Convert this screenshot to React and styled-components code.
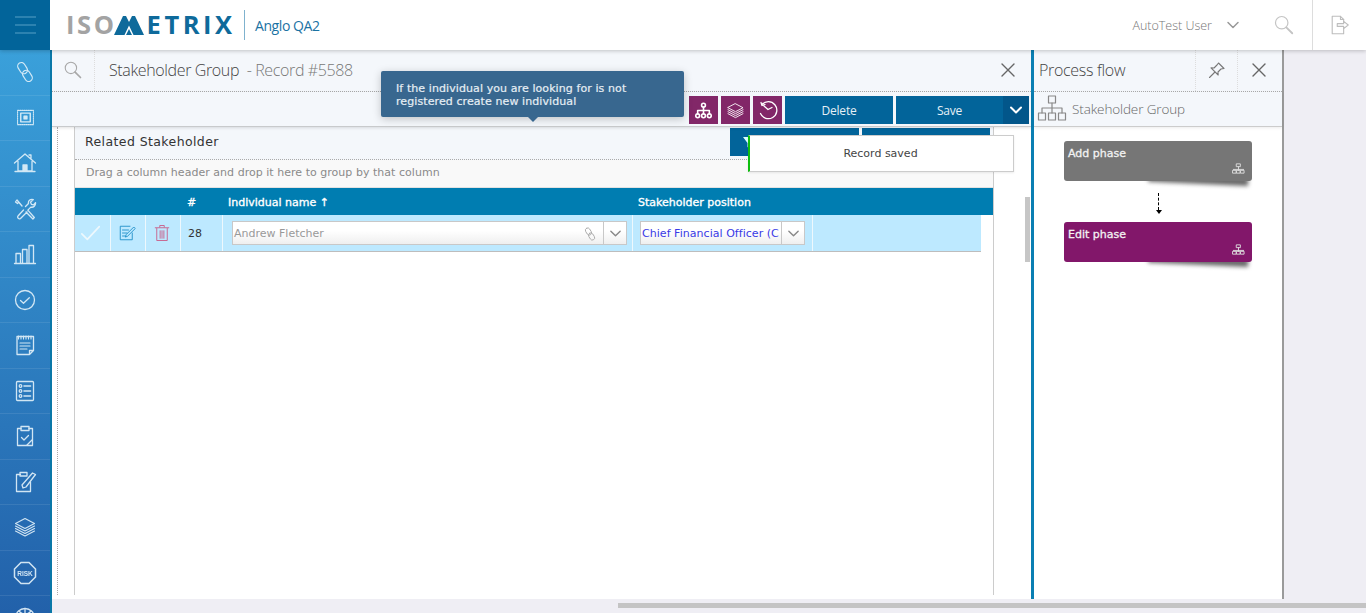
import React from "react";
import styled, { createGlobalStyle } from "styled-components";

const Global = createGlobalStyle`
  html, body { margin: 0; padding: 0; height: 100%; overflow: hidden; background: #efeef4; }
  * { box-sizing: border-box; }
`;

const Page = styled.div`
  width: 1366px; height: 613px; display: flex; flex-direction: column; overflow: hidden; position: relative;
  font-family: "DejaVu Sans", Verdana, sans-serif; background: #efeef4;
`;
const TopBar = styled.header`
  height: 50px; flex: none; display: flex; align-items: center; background: #fff; position: relative; z-index: 3;
  box-shadow: 0 1px 4px rgba(0,0,0,.22);
`;
const Burger = styled.div`
  width: 50px; height: 50px; background: #02649a; display: flex; flex-direction: column; gap: 6px; align-items: center; justify-content: center;
  span { display: block; width: 21px; height: 2px; background: #2c82b0; }
`;
const Logo = styled.div`
  margin-left: 16px; display: flex; align-items: center; font-family: "Open Sans", sans-serif; font-weight: 700; font-size: 25.5px; line-height: 1;
  letter-spacing: 2.6px; width: 178px; height: 30px;
`;
const LogoGrey = styled.span`color: #a3a3a3; margin-right: -3px;`;
const LogoBlue = styled.span`color: #0e6a9b; margin-left: 3px; letter-spacing: 3.5px;`;
const LogoDivider = styled.div`width: 1px; height: 30px; background: #7fb2ce;`;
const Tenant = styled.div`margin-left: 10px; font-family: "Open Sans", sans-serif; font-size: 14px; letter-spacing: -.42px; color: #1a72a3;`;
const TopRight = styled.div`margin-left: auto; display: flex; align-items: center; height: 50px;`;
const UserName = styled.div`font-family: "Open Sans", sans-serif; font-weight: 300; font-size: 12.5px; color: #777;`;
const TopIconSlot = styled.div`
  display: flex; align-items: center; justify-content: center; width: ${p => p.$w}px; height: 50px; margin-left: ${p => p.$ml || 0}px;
  ${p => p.$line ? "border-left: 1px solid #ddd;" : ""}
`;
const Body = styled.div`flex: 1; min-height: 0; display: flex;`;
const Sidebar = styled.nav`
  width: 52px; flex: none; overflow: hidden; background: linear-gradient(180deg, #3aa0da 0%, #2261aa 100%); border-right: 2px solid #0a78a8;
  position: relative; z-index: 2;
`;
const SideItem = styled.div`
  height: 45.5px; display: flex; align-items: center; justify-content: center; border-bottom: 1px solid rgba(255,255,255,.09);
  svg { opacity: .9; }
`;
const Workspace = styled.div`flex: 1; min-width: 0; display: flex; flex-direction: column;`;
const Panels = styled.div`flex: 1; min-height: 0; display: flex;`;
const BottomBar = styled.div`
  height: 14px; flex: none; background: #efeef4; padding: 4px 0 5px 566px;
  span { display: block; height: 5px; background: #c4c4c4; }
`;
const MainPanel = styled.main`width: 979px; flex: none; display: flex; flex-direction: column; background: #fff;`;
const TitleBar = styled.div`
  height: 42px; flex: none; display: flex; align-items: center; background: #f4f7fb; border-bottom: 1px dotted #aaa;
`;
const TitleSearch = styled.div`width: 43px; height: 41px; display: flex; align-items: center; justify-content: center; border-right: 1px dotted #ddd; padding-bottom: 2px;`;
const Title = styled.div`margin: -2px 0 0 14px; font-family: "Open Sans", sans-serif; font-weight: 300; font-size: 16px; letter-spacing: -.37px; color: #444; white-space: pre;
  em { font-style: normal; color: #777; }
`;
const TitleClose = styled.div`margin: -2px 0 0 auto; width: 46px; display: flex; justify-content: center;`;
const Toolbar = styled.div`
  height: 35px; flex: none; display: flex; justify-content: flex-end; gap: 3px; padding: 4px 2px 0 0; background: #f4f7fb; border-bottom: 1px solid #c8cacc;
  box-shadow: 0 1px 3px rgba(0,0,0,.12); position: relative; z-index: 1;
`;
const IconBtn = styled.div`width: 29px; height: 28px; background: #822768; display: flex; align-items: center; justify-content: center;`;
const ActionBtn = styled.div`
  width: ${p => p.$w}px; height: 28px; background: #02649a; color: #e6f0f6; font-family: "Open Sans", sans-serif; font-size: 12px; letter-spacing: -.2px;
  display: flex; align-items: center; justify-content: center;
`;
const Caret = styled.div`width: 26px; height: 28px; margin-left: -3px; background: #02568a; display: flex; align-items: center; justify-content: center;`;
const Content = styled.div`flex: 1; min-height: 0; display: flex; padding-left: 5px; padding-bottom: 4px;`;
const Gutter = styled.div`width: 17px; flex: none; border-left: 1px dotted #aaa;`;
const GridPanel = styled.section`width: 920px; flex: none; display: flex; flex-direction: column; border-left: 1px solid #ccc; border-right: 1px solid #ccc;`;
const SectionHead = styled.div`
  height: 33px; flex: none; display: flex; align-items: flex-start; background: #f4f7fb; border-bottom: 1px dotted #aaa; padding: 1px 3px 0 10px; gap: 3px;
`;
const SectionTitle = styled.div`flex: 1; font-size: 12.5px; line-height: 28px; color: #333; letter-spacing: .4px;`;
const HeadBtn = styled.div`width: ${p => p.$w}px; height: 28px; background: #02649a; padding: 7px 0 0 12px;`;
const GroupHint = styled.div`height: 28px; flex: none; background: #f9f9f9; border-bottom: 1px solid #e2e2e2; padding-left: 11px; font-size: 11px; line-height: 26px; color: #8a8a8a; letter-spacing: .03px;`;
const columns = "36px 35px 35px 42px 410px 180px 1fr";
const HeadRow = styled.div`
  height: 27px; flex: none; display: grid; grid-template-columns: ${columns}; background: #007db1; color: #fff; font-size: 11px; line-height: 29px;
  -webkit-text-stroke: .35px #fff;
`;
const HeadCell = styled.div`padding-left: ${p => p.$pl}px; grid-column: ${p => p.$col}; white-space: nowrap;`;
const DataRow = styled.div`
  height: 37px; width: 906px; flex: none; display: grid; grid-template-columns: ${columns}; background: #bde9ff; border-bottom: 1px solid #bdbdbd;
`;
const Cell = styled.div`
  border-right: ${p => p.$end ? 0 : "1px solid #eef8fd"}; display: flex; align-items: center; ${p => p.$center ? "justify-content: center;" : ""}
  padding: ${p => p.$pad || "0"}; font-size: 11px; color: #333;
`;
const Combo = styled.div`
  height: 24px; width: ${p => p.$w}px; display: flex; border: 1px solid #c8c8c8; background: linear-gradient(180deg, #fff 40%, #efefef 100%);
`;
const ComboText = styled.div`
  flex: 1; min-width: 0; display: flex; align-items: center; justify-content: space-between; padding: 1px 6px 0 1px; white-space: nowrap; overflow: hidden;
  font-size: 11px; color: ${p => p.$color}; letter-spacing: ${p => p.$ls || 0}px;
`;
const ComboBtn = styled.div`width: 23px; flex: none; display: flex; align-items: center; justify-content: center; border-left: 1px solid #c8c8c8;`;
const ScrollArea = styled.div`flex: 1; display: flex; justify-content: flex-end; padding: 70px 1px 0 0;`;
const ScrollThumb = styled.div`width: 5px; height: 65px; background: #c6c6c6;`;

const FlowPanel = styled.aside`
  width: 253px; flex: none; display: flex; flex-direction: column; background: #fff; border-left: 3px solid #0a7fb3; border-right: 2px solid #9a9a9a;
`;
const FlowHead = styled.div`height: 42px; flex: none; display: flex; align-items: center; background: #f4f7fb; border-bottom: 1px dotted #aaa; padding-right: 3px;`;
const FlowTitle = styled.div`flex: 1; margin-top: -2px; padding-left: 5px; font-family: "Open Sans", sans-serif; font-weight: 300; font-size: 16px; letter-spacing: -.3px; color: #444;`;
const FlowTool = styled.div`width: 42px; height: 41px; display: flex; align-items: center; justify-content: center; border-left: 1px dotted #ddd; padding-bottom: 2px;`;
const FlowSub = styled.div`
  height: 35px; flex: none; display: flex; align-items: center; gap: 5px; padding-left: 3px; background: #f4f7fb; border-bottom: 1px solid #ccc;
  font-family: "Open Sans", sans-serif; font-weight: 300; font-size: 13.5px; letter-spacing: -.12px; color: #666; box-shadow: 0 1px 3px rgba(0,0,0,.08);
`;
const FlowBody = styled.div`display: flex; flex-direction: column; align-items: center; padding: 14px 0 0 0;`;
const PhaseCard = styled.div`
  width: 188px; height: 40px; border-radius: 3px; background: ${p => p.$bg}; color: #f2f2f2; font-size: 11px; -webkit-text-stroke: .3px #f2f2f2; padding: 5px 4px 0; line-height: 15px; position: relative;
  svg { position: absolute; right: 7px; bottom: 6px; }
`;
const CardWrap = styled.div`
  position: relative; z-index: 0;
  &::after { content: ""; position: absolute; z-index: -1; right: 4px; bottom: -5px; width: 100px; height: 8px; background: #666; filter: blur(2px); transform: rotate(2.5deg); transform-origin: right bottom; }
`;
const FlowArrow = styled.div`
  height: 41px; display: flex; flex-direction: column; align-items: center; justify-content: flex-start; padding: 12px 0 0 1px;
  i { display: block; width: 0; height: 17px; border-left: 1px dashed #000; }
  b { display: block; width: 0; height: 0; border: 3.5px solid transparent; border-top: 4px solid #000; border-bottom: 0; }
`;
const Tooltip = styled.div`
  position: absolute; left: 381px; top: 71px; width: 303px; height: 46px; background: #38678f; border-radius: 2px; padding: 11px 15px; z-index: 6;
  color: #e6eef4; font-size: 11px; font-weight: 400; line-height: 13px; letter-spacing: .09px; box-shadow: 0 2px 8px rgba(0,0,0,.22); -webkit-text-stroke: .2px #e6eef4;
  &::after { content: ""; position: absolute; left: 147px; bottom: -5px; border: 5px solid transparent; border-top: 5px solid #38678f; border-bottom: 0; }
`;
const Toast = styled.div`
  position: absolute; left: 748px; top: 135px; width: 266px; height: 37px; background: #fff; border: 1px solid #ccc; border-left: 2px solid #0fbf0f; z-index: 6;
  display: flex; align-items: center; justify-content: center; font-size: 11px; color: #444; padding-right: 2px; box-shadow: 0 1px 2px rgba(0,0,0,.08);
`;

const S = ({ size = 24, stroke = "#e4f2fa", sw = 1.3, vb = 24, children, fill = "none" }) => (
  <svg width={size} height={size} viewBox={`0 0 ${vb} ${vb}`} fill={fill} stroke={stroke} strokeWidth={sw} strokeLinecap="round" strokeLinejoin="round">{children}</svg>
);
const ChainLinks = () => <g transform="rotate(-32 12 12)"><rect x="8" y="0.500" width="8" height="13" rx="4" /><rect x="8" y="10.500" width="8" height="13" rx="4" /></g>;
const Chain = () => <S size={22} sw={1.3}><ChainLinks /></S>;
const Chip = () => <S size={19}><rect x="2" y="3" width="20" height="18" strokeDasharray="1.500 1.200" /><rect x="6" y="6.500" width="12" height="11" strokeWidth="1.800" /><rect x="10" y="10" width="4" height="4" fill="#e4f2fa" /></S>;
const Home = () => <S><path d="M1.500 12 12 3l10.500 9M18 7.500V4h-2M5 10.500V20h14v-9.500M2 20.500h20" /><rect x="10" y="14" width="4" height="6" fill="#e4f2fa" /></S>;
const Tools = () => <S><path d="m4 3 5 6M3.500 3.500 2.500 5l2 1.500 1-1.200M10.500 13 5 19a1.800 1.800 0 0 0 2.500 2.500l6.500-6.500M12.500 9.500l3-3c-.6-2.400 1.600-4.700 4.800-3.900L17.500 5.300l.9 2 2.100.6 2-2.300c.4 3-2 5.200-4.700 4.500l-3 3 6.500 7.400-1.400 1.500-6.900-7" /></S>;
const Bars = () => <S><path d="M1.500 21.500h21M3 21v-9.500h4.500V21M9.500 21V7.500H14V21M16 21V3.500h4.500V21" /></S>;
const Check = () => <S><circle cx="12" cy="12" r="9.500" /><path d="m7.500 12.500 3 2.700 5.800-5.400" /></S>;
const NoteBook = () => <S><path d="M4 3.500h16.500v14l-4 4H4zM16.500 21.500v-4h4" /><path d="M5.500 3v3M8 3v3M10.500 3v3M13 3v3M15.500 3v3M18 3v3M7 10h10M7 13h10M7 16h7" strokeWidth="1.100" /></S>;
const ListDoc = () => <S><rect x="3.500" y="2.500" width="17" height="19" rx="1" /><circle cx="7.500" cy="7" r="1.300" /><circle cx="7.500" cy="12" r="1.300" /><circle cx="7.500" cy="17" r="1.300" /><path d="M11 7h6.500M11 12h6.500M11 17h6.500" strokeWidth="1.600" /></S>;
const Clip = () => <S><path d="M8 4.500H4.500v17h15v-17H16" /><rect x="8" y="2.500" width="8" height="4" /><path d="m8.500 13.500 2.500 2.500 4.500-4.500M14 21l5-5" /></S>;
const ClipEdit = () => <S><path d="M7.500 4.500h-4v17h14V12" /><rect x="7" y="2.500" width="7" height="3.500" /><path d="m9 15 1 3 3-1L22.500 4.500 19.500 3z" /></S>;
const Layers = ({ size = 24, stroke = "#e4f2fa" }) => <S size={size} stroke={stroke} sw={1.1}><path d="M12 3.500 21.500 8.500 12 13.500 2.500 8.500zM2.500 11 12 16l9.500-5M2.500 13.500 12 18.500l9.500-5M2.500 16 12 21l9.500-5" /></S>;
const Risk = () => (
  <S sw={1.5}>
    <path d="M8 1.500h8L22.500 8v8L16 22.500H8L1.500 16V8z" strokeLinejoin="miter" />
    <text x="12" y="14.500" textAnchor="middle" fontSize="6.500" fontWeight="700" fontFamily="Liberation Sans, sans-serif" fill="#e4f2fa" stroke="none">RISK</text>
  </S>
);
const Globe = () => <S><circle cx="12" cy="12" r="9.500" /><path d="M2.500 12h19M12 2.500v19M6 5c3 4 9 4 12 0" /></S>;
const Search = ({ size = 20, c = "#a8a8a8" }) => <S size={size} stroke={c} sw={1.3}><circle cx="9.500" cy="9.500" r="6.800" /><path d="m14.500 14.500 6.500 6.500" strokeWidth="2" /></S>;
const Chevron = ({ size = 14, c = "#888", sw = 1.5 }) => <S size={size} stroke={c} sw={sw} vb={14}><path d="m2 4.500 5 5 5-5" /></S>;
const Exit = () => <S size={22} stroke="#bdbdbd" sw={1.2}><path d="M16 9V6l-3.500-3.500H3.500v19H16v-6" /><path d="M12.500 2.500V6H16" /><path d="M9 10.500h7V8l5 4-5 4v-2.500H9z" /></S>;
const XIcon = ({ c = "#666" }) => <S size={14} stroke={c} sw={1.4} vb={14}><path d="m1 1 12 12M13 1 1 13" /></S>;
const Pin = () => <S size={18} stroke="#777" sw={1.1} vb={18}><path d="M1.500 16.500 7 11M10.500 2 16 7.500l-3 .5-3 3 .2 3-7.200-7.200 3 .2 3-3z" /></S>;
const Tree = ({ size = 17, c = "#fff", sw = 1.5 }) => <S size={size} stroke={c} sw={sw} vb={16}><circle cx="8" cy="3" r="1.800" /><circle cx="2.500" cy="13" r="1.800" /><circle cx="8" cy="13" r="1.800" /><circle cx="13.500" cy="13" r="1.800" /><path d="M8 5v6M2.500 11V8h11v3" /></S>;
const History = () => <S size={20} stroke="#fff" sw={1.3} vb={20}><path d="M4 4.500a8.500 8.500 0 1 1-1.500 9" /><path d="m3 2.500 1 3 3-1M6 6l4 3.500 4-2" /></S>;
const OrgChart = () => <S size={30} stroke="#888" sw={1.2} vb={30}><rect x="11.500" y="2" width="7" height="7" /><rect x="1.500" y="19" width="7" height="7" /><rect x="11.500" y="19" width="7" height="7" /><rect x="21.500" y="19" width="7" height="7" /><path d="M15 9v10M5 19v-5h20v5" /></S>;
const MiniFlow = () => <S size={13} stroke="#ddd" sw={1} vb={14}><rect x="5" y="2" width="4" height="3" /><rect x="1" y="9" width="3.500" height="3" /><rect x="5.200" y="9" width="3.500" height="3" /><rect x="9.500" y="9" width="3.500" height="3" /><path d="M7 5v4M1.500 8h11" /></S>;
const MarkM = () => (
  <svg width="30" height="19" viewBox="0 0 30 19">
    <path d="M0 19 9 0h3l3 6 3-6h3l9 19H0z" fill="#0e6a9b" />
    <path d="M10.500 19 15 9.500l4.500 9.500h-1.500L15 13l-3 6z" fill="#fff" />
  </svg>
);

const sideIcons = [Chain, Chip, Home, Tools, Bars, Check, NoteBook, ListDoc, Clip, ClipEdit, Layers, Risk, Globe];

export default function App() {
  return (
    <Page>
      <Global />
      <TopBar>
        <Burger><span /><span /><span /></Burger>
        <Logo>
          <LogoGrey>ISO</LogoGrey><MarkM /><LogoBlue>ETRIX</LogoBlue>
        </Logo>
        <LogoDivider />
        <Tenant>Anglo QA2</Tenant>
        <TopRight>
          <UserName>AutoTest User</UserName>
          <TopIconSlot $w={14} $ml={14}><Chevron c="#999" /></TopIconSlot>
          <TopIconSlot $w={22} $ml={33}><Search size={22} c="#c4c4c4" /></TopIconSlot>
          <TopIconSlot $w={54} $ml={17} $line><Exit /></TopIconSlot>
        </TopRight>
      </TopBar>
      <Body>
        <Sidebar>
          {sideIcons.map((I, i) => <SideItem key={i}><I /></SideItem>)}
        </Sidebar>
        <Workspace>
          <Panels>
            <MainPanel>
              <TitleBar>
                <TitleSearch><Search /></TitleSearch>
                <Title>Stakeholder Group <em> - Record #5588</em></Title>
                <TitleClose><XIcon /></TitleClose>
              </TitleBar>
              <Toolbar>
                <IconBtn><Tree /></IconBtn>
                <IconBtn><Layers size={19} stroke="#fff" /></IconBtn>
                <IconBtn><History /></IconBtn>
                <ActionBtn $w={108}>Delete</ActionBtn>
                <ActionBtn $w={107}>Save</ActionBtn>
                <Caret><Chevron c="#fff" sw={2} /></Caret>
              </Toolbar>
              <Content>
                <Gutter />
                <GridPanel>
                  <SectionHead>
                    <SectionTitle>Related Stakeholder</SectionTitle>
                    <HeadBtn $w={129}><svg width="14" height="14" viewBox="0 0 14 14"><path d="M1 1h12L8.500 7v6l-3-2V7z" fill="#dff" /></svg></HeadBtn>
                    <HeadBtn $w={128} />
                  </SectionHead>
                  <GroupHint>Drag a column header and drop it here to group by that column</GroupHint>
                  <HeadRow>
                    <HeadCell $col={4} $pl={6}>#</HeadCell>
                    <HeadCell $col={5} $pl={5}>Individual name ↑</HeadCell>
                    <HeadCell $col={6} $pl={5}>Stakeholder position</HeadCell>
                  </HeadRow>
                  <DataRow>
                    <Cell $center $pad="0 3px 0 0">
                      <S size={22} stroke="#eef8fd" sw={1.8}><path d="m2 13 6 6L21 5" /></S>
                    </Cell>
                    <Cell $center $pad="0 2px 0 0">
                      <S size={18} stroke="#1f8fc8" sw={1.2}><path d="M19 12v9H3V3h13" /><path d="M6 8h8M6 12h6M6 16h4M10 17l1-3L21 4l2 2-10 10z" /></S>
                    </Cell>
                    <Cell $center $pad="0 2px 0 0">
                      <S size={18} stroke="#c85c88" sw={1.2}><path d="M5 6v16h14V6M3 5h18M9 4V2h6v2M9.500 9v10M12 9v10M14.500 9v10" /></S>
                    </Cell>
                    <Cell $pad="1px 0 0 7px">28</Cell>
                    <Cell $pad="0 0 0 9px">
                      <Combo $w={395}>
                        <ComboText $color="#999">Andrew Fletcher
                          <S size={14} stroke="#aaa" sw={1.5}><ChainLinks /></S>
                        </ComboText>
                        <ComboBtn><Chevron size={13} /></ComboBtn>
                      </Combo>
                    </Cell>
                    <Cell $pad="0 0 0 7px">
                      <Combo $w={165}>
                        <ComboText $color="#3a3ae6" $ls={.04}>Chief Financial Officer (C</ComboText>
                        <ComboBtn><Chevron size={13} /></ComboBtn>
                      </Combo>
                    </Cell>
                    <Cell $end />
                  </DataRow>
                </GridPanel>
                <ScrollArea><ScrollThumb /></ScrollArea>
              </Content>
            </MainPanel>
            <FlowPanel>
              <FlowHead>
                <FlowTitle>Process flow</FlowTitle>
                <FlowTool><Pin /></FlowTool>
                <FlowTool><XIcon /></FlowTool>
              </FlowHead>
              <FlowSub><OrgChart />Stakeholder Group</FlowSub>
              <FlowBody>
                <CardWrap><PhaseCard $bg="#767676">Add phase<MiniFlow /></PhaseCard></CardWrap>
                <FlowArrow><i /><b /></FlowArrow>
                <CardWrap><PhaseCard $bg="#82176a">Edit phase<MiniFlow /></PhaseCard></CardWrap>
              </FlowBody>
            </FlowPanel>
          </Panels>
          <BottomBar><span /></BottomBar>
        </Workspace>
      </Body>
      <Tooltip>If the individual you are looking for is not registered create new individual</Tooltip>
      <Toast>Record saved</Toast>
    </Page>
  );
}
